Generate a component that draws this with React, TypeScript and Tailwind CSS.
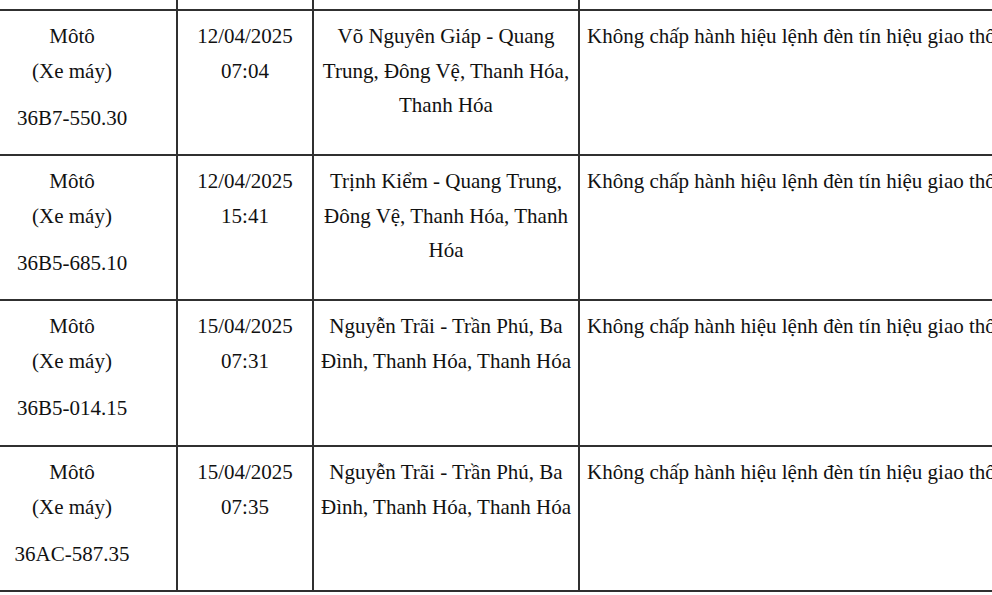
const rows = [
  {
    plate: "36B7-550.30",
    date: "12/04/2025",
    time: "07:04",
    place: "Võ Nguyên Giáp - Quang Trung, Đông Vệ, Thanh Hóa, Thanh Hóa",
    h: "h-[145px]",
  },
  {
    plate: "36B5-685.10",
    date: "12/04/2025",
    time: "15:41",
    place: "Trịnh Kiểm - Quang Trung, Đông Vệ, Thanh Hóa, Thanh Hóa",
    h: "h-[145px]",
  },
  {
    plate: "36B5-014.15",
    date: "15/04/2025",
    time: "07:31",
    place: "Nguyễn Trãi - Trần Phú, Ba Đình, Thanh Hóa, Thanh Hóa",
    h: "h-[146px]",
  },
  {
    plate: "36AC-587.35",
    date: "15/04/2025",
    time: "07:35",
    place: "Nguyễn Trãi - Trần Phú, Ba Đình, Thanh Hóa, Thanh Hóa",
    h: "h-[145px]",
  },
];

const grid = "grid grid-cols-[210px_136px_266px_520px] border-b-2 border-[#303030]";
const cell = "border-r-2 border-[#303030]";

export default function App() {
  return (
    <div
      className="w-[992px] h-[595px] overflow-hidden bg-white text-[#111] text-[21px] leading-[34.5px]"
      style={{ fontFamily: '"Liberation Serif", "Times New Roman", serif' }}
    >
      <div className="ml-[-32px] w-[1132px]">
        <div className={`${grid} h-[11px]`}>
          <div className={cell} />
          <div className={cell} />
          <div className={cell} />
          <div />
        </div>
        {rows.map((r) => (
          <div key={r.plate} className={`${grid} ${r.h}`}>
            <div className={`${cell} pt-2 text-center`}>
              <p>Môtô</p>
              <p>(Xe máy)</p>
              <p className="mt-[13px]">{r.plate}</p>
            </div>
            <div className={`${cell} pt-2 text-center`}>
              <p>{r.date}</p>
              <p>{r.time}</p>
            </div>
            <div className={`${cell} pt-2 px-[6px] text-center`}>
              <p>{r.place}</p>
            </div>
            <div className="pt-2 pl-[7px] whitespace-nowrap">
              Không chấp hành hiệu lệnh đèn tín hiệu giao thông
            </div>
          </div>
        ))}
      </div>
    </div>
  );
}
